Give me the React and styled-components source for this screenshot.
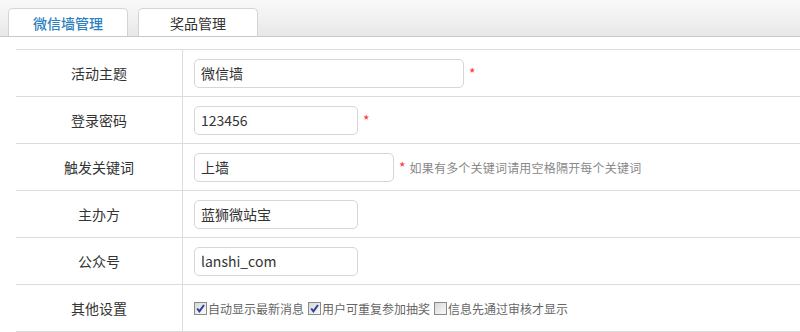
import React from "react";
import styled, { createGlobalStyle } from "styled-components";

const Global = createGlobalStyle`
  html, body { margin: 0; padding: 0; background: #fff; }
  body { font-family: "Noto Sans CJK SC", "Noto Sans", sans-serif; color: #333; }
`;

const TabBar = styled.div`
  display: flex;
  gap: 10px;
  padding: 8px 8px 0;
  height: 28px;
  background: linear-gradient(#f9f9f9, #e8e8e8);
  border-bottom: 1px solid #c8c8c8;
`;

const Tab = styled.div`
  width: 118px;
  height: 27px;
  background: #fff;
  border: 1px solid #d4d4d4;
  border-bottom: none;
  border-radius: 5px 5px 0 0;
  display: flex;
  align-items: center;
  justify-content: center;
  font-size: 14px;
  color: ${(p) => (p.$active ? "#2d7fc0" : "#333")};
  font-weight: ${(p) => (p.$active ? 500 : 400)};
`;

const Table = styled.div`
  margin: 12px 0 0 16px;
  display: grid;
  grid-template-columns: 167px 1fr;
  border-top: 1px solid #dcdcdc;
`;

const Label = styled.div`
  height: 46px;
  border-bottom: 1px solid #dcdcdc;
  border-right: 1px solid #dcdcdc;
  display: flex;
  align-items: center;
  justify-content: center;
  font-size: 14px;
  color: #333;
`;

const Cell = styled.div`
  height: 46px;
  border-bottom: 1px solid #dcdcdc;
  display: flex;
  align-items: center;
  padding-left: 11px;
`;

const Input = styled.input`
  box-sizing: border-box;
  width: ${(p) => p.$w}px;
  height: 29px;
  border: 1px solid #d6d6d6;
  border-radius: 5px;
  padding: 0 6px;
  font-family: "Noto Sans CJK SC", "Noto Sans", sans-serif;
  font-size: 14px;
  color: #333;
  outline: none;
  background: #fff;
`;

const Star = styled.span`
  color: #f33;
  font-size: 14px;
  margin-left: 5px;
  line-height: 1;
`;

const Hint = styled.span`
  color: #888;
  font-size: 12px;
  margin-left: 4px;
  letter-spacing: 0.2px;
`;

const CheckGroup = styled.div`
  display: flex;
  align-items: center;
  gap: 4px;
`;

const CheckLabel = styled.label`
  display: flex;
  align-items: center;
  font-size: 12px;
  color: #666;
`;

const Box = styled.span`
  box-sizing: border-box;
  width: 13px;
  height: 13px;
  border: 1px solid #8a8a8a;
  background: linear-gradient(135deg, #d8d8d8, #fafafa);
  display: inline-flex;
  align-items: center;
  justify-content: center;
  margin-right: 1px;
`;

const Check = ({ on, children }) => (
  <CheckLabel>
    <Box>
      {on && (
        <svg width="11" height="11" viewBox="0 0 10 10">
          <path d="M2 5 L4 7.5 L8.2 1.8" stroke="#2a3f9e" strokeWidth="1.8" fill="none" />
        </svg>
      )}
    </Box>
    {children}
  </CheckLabel>
);

export default function App() {
  return (
    <>
      <Global />
      <TabBar>
        <Tab $active>微信墙管理</Tab>
        <Tab>奖品管理</Tab>
      </TabBar>
      <Table>
        <Label>活动主题</Label>
        <Cell>
          <Input $w={270} defaultValue="微信墙" />
          <Star>*</Star>
        </Cell>
        <Label>登录密码</Label>
        <Cell>
          <Input $w={164} defaultValue="123456" />
          <Star>*</Star>
        </Cell>
        <Label>触发关键词</Label>
        <Cell>
          <Input $w={200} defaultValue="上墙" />
          <Star>*</Star>
          <Hint>如果有多个关键词请用空格隔开每个关键词</Hint>
        </Cell>
        <Label>主办方</Label>
        <Cell>
          <Input $w={164} defaultValue="蓝狮微站宝" />
        </Cell>
        <Label>公众号</Label>
        <Cell>
          <Input $w={164} defaultValue="lanshi_com" />
        </Cell>
        <Label>其他设置</Label>
        <Cell>
          <CheckGroup>
            <Check on>自动显示最新消息</Check>
            <Check on>用户可重复参加抽奖</Check>
            <Check>信息先通过审核才显示</Check>
          </CheckGroup>
        </Cell>
        <Label />
        <Cell />
      </Table>
    </>
  );
}
